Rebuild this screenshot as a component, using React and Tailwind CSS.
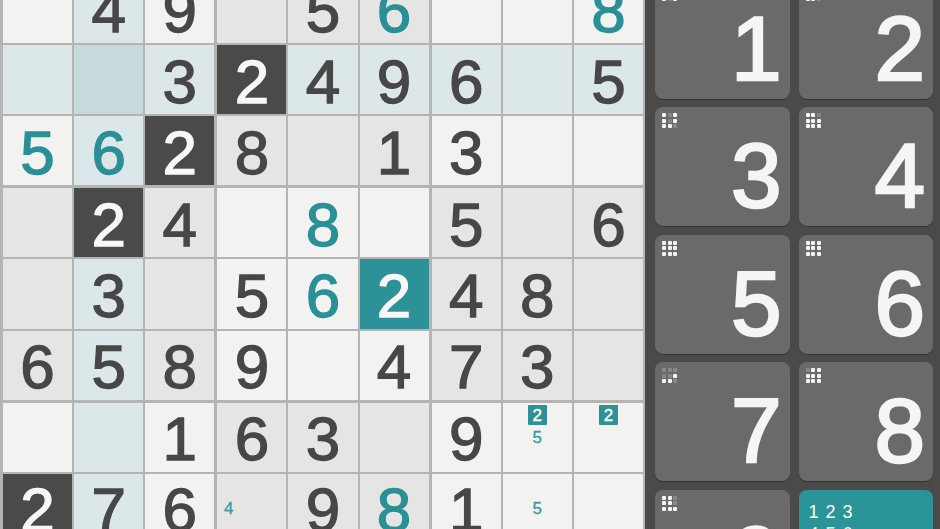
import React from "react";

const BG = {
  W: "bg-[#f2f2f1]",
  G: "bg-[#e5e5e3]",
  B: "bg-[#dce7e9]",
  D: "bg-[#c6d9dd]",
  K: "bg-[#4b4a48]",
  T: "bg-[#2c9298]",
};

// [bg, value, textKind, notes]
const rows = [
  [["W"], ["B", "4"], ["W", "9"], ["G"], ["G", "5"], ["G", "6", "t"], ["W"], ["W"], ["W", "8", "t"]],
  [["B"], ["D"], ["B", "3"], ["K", "2"], ["B", "4"], ["B", "9"], ["B", "6"], ["B"], ["B", "5"]],
  [["W", "5", "t"], ["B", "6", "t"], ["K", "2"], ["G", "8"], ["G"], ["G", "1"], ["W", "3"], ["W"], ["W"]],
  [["G"], ["K", "2"], ["G", "4"], ["W"], ["W", "8", "t"], ["W"], ["G", "5"], ["G"], ["G", "6"]],
  [["G"], ["B", "3"], ["G"], ["W", "5"], ["W", "6", "t"], ["T", "2"], ["G", "4"], ["G", "8"], ["G"]],
  [["G", "6"], ["B", "5"], ["G", "8"], ["W", "9"], ["W"], ["W", "4"], ["G", "7"], ["G", "3"], ["G"]],
  [["W"], ["B"], ["W", "1"], ["G", "6"], ["G", "3"], ["G"], ["W", "9"], ["W", null, null, { 2: "hl", 5: "n" }], ["W", null, null, { 2: "hl" }]],
  [["K", "2"], ["B", "7"], ["W", "6"], ["G", null, null, { 4: "n" }], ["G", "9"], ["G", "8", "t"], ["W", "1"], ["W", null, null, { 5: "n" }], ["W"]],
  [["W"], ["B"], ["W"], ["G"], ["G"], ["G"], ["W"], ["W"], ["W"]],
];

function Cell({ cell }) {
  const [bg, v, kind, notes] = cell;
  let color = "text-[#474747]";
  if (bg === "K" || bg === "T") color = "text-[#f7f7f7]";
  else if (kind === "t") color = "text-[#2a9096]";
  if (notes) {
    return (
      <div className={`${BG[bg]} aspect-square grid grid-cols-3 grid-rows-3`}>
        {[1, 2, 3, 4, 5, 6, 7, 8, 9].map((n) => (
          <div key={n} className="flex items-center justify-center">
            {notes[n] === "hl" ? (
              <span className="bg-[#2c9298] text-white w-[19px] h-[20px] flex items-center justify-center text-[17px] leading-none rounded-[1px] mt-[2px] [-webkit-text-stroke:0.4px_currentcolor]">
                {n}
              </span>
            ) : notes[n] ? (
              <span className="text-[#3a9aa0] text-[17px] leading-none [-webkit-text-stroke:0.3px_currentcolor]">{n}</span>
            ) : null}
          </div>
        ))}
      </div>
    );
  }
  return (
    <div className={`${BG[bg]} ${color} aspect-square flex items-center justify-center pt-[4px] text-[62px] leading-none [-webkit-text-stroke:1.3px_currentcolor]`}>
      {v || ""}
    </div>
  );
}

const icons = {
  1: [1, 1, 1, 1, 1, 1, 1, 0, 1],
  2: [1, 1, 1, 1, 1, 1, 1, 1, 0],
  3: [1, 0, 1, 1, 0, 1, 1, 1, 0],
  4: [1, 1, 0, 1, 1, 1, 1, 1, 1],
  5: [1, 1, 1, 1, 1, 1, 1, 1, 1],
  6: [1, 1, 1, 1, 1, 1, 1, 1, 1],
  7: [0, 0, 0, 0, 0, 1, 1, 1, 0],
  8: [0, 1, 1, 1, 1, 1, 1, 1, 1],
  9: [1, 1, 0, 1, 1, 0, 1, 1, 1],
};

function DotIcon({ n }) {
  return (
    <div className="absolute top-[6px] left-[7px] grid grid-cols-3 gap-[1.5px]">
      {icons[n].map((on, i) => (
        <div key={i} className={`w-[4px] h-[4px] rounded-[1px] ${on ? "bg-[#f4f4f4]" : "bg-[#8a8887]"}`} />
      ))}
    </div>
  );
}

function Key({ n }) {
  return (
    <div className="relative h-[119px] rounded-[8px] bg-[#6c6a69] shadow-[0_1px_0_rgba(0,0,0,0.3)] flex items-end justify-end pr-[8px] pb-[5px] overflow-hidden">
      <DotIcon n={n} />
      <span className="text-[91px] leading-[90px] text-[#f5f5f5] [-webkit-text-stroke:2.4px_currentcolor]">{n}</span>
    </div>
  );
}

export default function App() {
  const boxes = [];
  for (let br = 0; br < 3; br++) {
    for (let bc = 0; bc < 3; bc++) {
      const cells = [];
      for (let r = 0; r < 3; r++) {
        for (let c = 0; c < 3; c++) {
          cells.push(<Cell key={`${r}-${c}`} cell={rows[br * 3 + r][bc * 3 + c]} />);
        }
      }
      boxes.push(
        <div key={`${br}-${bc}`} className="grid grid-cols-3 gap-[2px]">
          {cells}
        </div>
      );
    }
  }
  return (
    <div
      className="w-[940px] h-[529px] overflow-hidden flex bg-[#4c4a48]"
      style={{ fontFamily: '"Liberation Sans", Arial, sans-serif' }}
    >
      <div className="w-[645px] shrink-0 overflow-hidden">
        <div className="mt-[-29px] bg-[#b4b4b2] pt-[3px] pl-[3px] pr-[2px] pb-[3px] grid grid-cols-3 gap-[3px]">
          {boxes}
        </div>
      </div>
      <div className="flex-1 pl-[10px] pr-[7px] overflow-hidden">
        <div className="mt-[-20.5px] grid grid-cols-2 gap-x-[9px] gap-y-[8.5px]">
          {[1, 2, 3, 4, 5, 6, 7, 8, 9].map((n) => (
            <Key key={n} n={n} />
          ))}
          <div className="h-[119px] rounded-[8px] bg-[#2b9499] pl-[10px] pt-[11px] text-white text-[18px] leading-[22px] tracking-[1px]">
            <div>1 2 3</div>
            <div>4 5 6</div>
            <div>7 8 9</div>
          </div>
        </div>
      </div>
    </div>
  );
}
